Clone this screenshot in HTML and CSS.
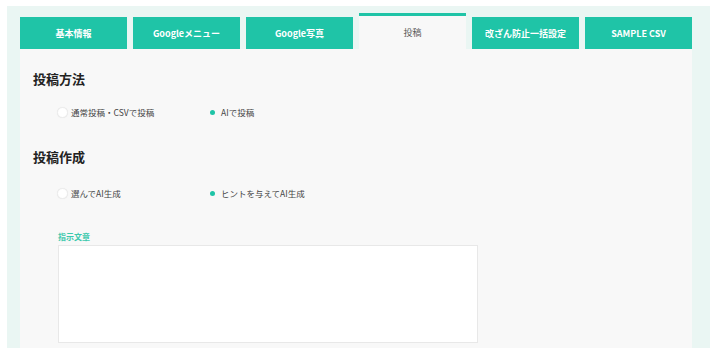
FILE: index.html
```html
<!DOCTYPE html>
<html lang="ja">
<head>
    <meta charset="UTF-8">
    <meta name="viewport" content="width=device-width, initial-scale=1.0">
    <title>投稿設定</title>
    <link rel="stylesheet" href="styles.css">
</head>
<body>

    <div class="panel">
        <!-- Tabs -->
        <div class="tabs">
            <div class="tab">基本情報</div>
            <div class="tab">Googleメニュー</div>
            <div class="tab">Google写真</div>
            <div class="tab active">投稿</div>
            <div class="tab">改ざん防止一括設定</div>
            <div class="tab">SAMPLE CSV</div>
        </div>

        <!-- Post settings -->
        <div class="content">
            <h2 class="section-title first">投稿方法</h2>
            <div class="radio-row">
                <label class="radio-item"><span class="radio"></span>通常投稿・CSVで投稿</label>
                <label class="radio-item"><span class="radio checked"></span>AIで投稿</label>
            </div>

            <h2 class="section-title">投稿作成</h2>
            <div class="radio-row second">
                <label class="radio-item"><span class="radio"></span>選んでAI生成</label>
                <label class="radio-item"><span class="radio checked"></span>ヒントを与えてAI生成</label>
            </div>

            <div class="field">
                <div class="field-label">指示文章</div>
                <textarea class="prompt"></textarea>
            </div>
        </div>
    </div>

</body>
</html>
```

FILE: styles.css
```css
body {
    font-family: "Noto Sans CJK JP", "Noto Sans", sans-serif;
    margin: 0;
    padding: 0;
    background-color: #ffffff;
    color: #333;
}

.panel {
    margin: 6px 5px 6px 7px;
    padding: 7px 18px 0 13px;
    background-color: #eaf6f3;
}

/* Tabs */
.tabs {
    display: flex;
    align-items: flex-end;
    gap: 6px;
}

.tab {
    width: 107px;
    height: 32px;
    display: flex;
    align-items: center;
    justify-content: center;
    background-color: #1fc4a7;
    color: #ffffff;
    font-size: 9px;
    font-weight: bold;
}

.tab.active {
    height: 33px;
    border-top: 3px solid #1fc4a7;
    background-color: #f8f8f8;
    color: #555;
    font-weight: normal;
}

/* Content */
.content {
    background-color: #f8f8f8;
    padding: 21px 13px 5px 13px;
}

.section-title {
    margin: 29px 0 0 0;
    font-size: 13px;
    line-height: 18px;
    font-weight: bold;
    color: #222;
}

.section-title.first {
    margin-top: 0;
}

.radio-row {
    display: flex;
    margin-top: 17px;
    padding-left: 24px;
    height: 14px;
}

.radio-row.second {
    margin-top: 20px;
}

.radio-item {
    width: 150px;
    display: flex;
    align-items: center;
    gap: 3px;
    font-size: 8.5px;
    color: #444;
}

.radio {
    width: 9px;
    height: 9px;
    border-radius: 50%;
    border: 1px solid #ececec;
    background-color: #ffffff;
    box-shadow: 0 0 1px rgba(0, 0, 0, 0.08);
    display: flex;
    align-items: center;
    justify-content: center;
}

.radio.checked {
    border-color: #f8f8f8;
    background-color: #f8f8f8;
    box-shadow: none;
}

.radio.checked::after {
    content: "";
    width: 5px;
    height: 5px;
    border-radius: 50%;
    background-color: #1fc4a7;
}

/* Prompt field */
.field {
    margin-top: 31px;
    padding-left: 25px;
}

.field-label {
    font-size: 8px;
    line-height: 12px;
    font-weight: bold;
    color: #3cc9ad;
}

.prompt {
    display: block;
    margin-top: 2px;
    width: 420px;
    height: 98px;
    box-sizing: border-box;
    border: 1px solid #e8e8e8;
    background-color: #ffffff;
    resize: none;
}
```
